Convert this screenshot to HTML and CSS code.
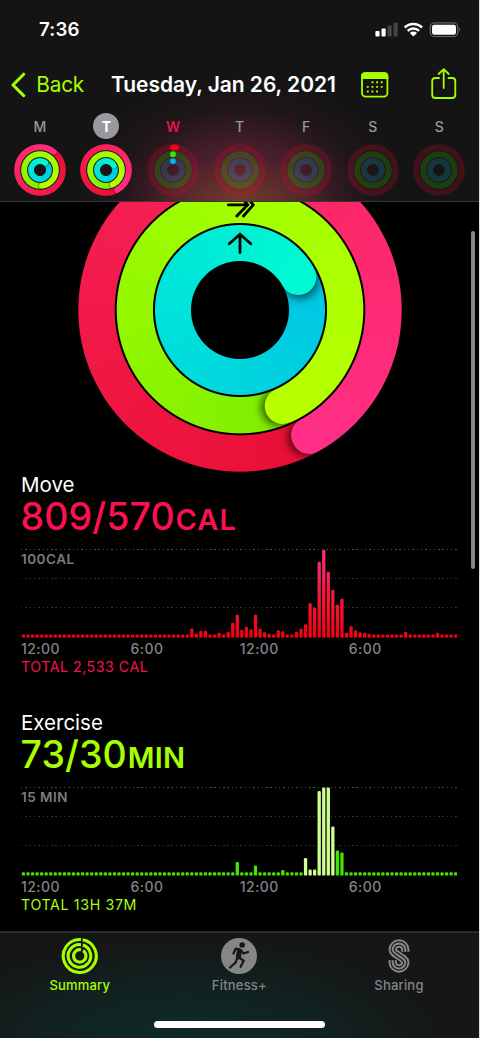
FILE: index.html
```html
<!DOCTYPE html>
<html lang="en">
<head>
<meta charset="utf-8">
<title>Activity</title>
<link rel="stylesheet" href="styles.css">
</head>
<body>
<div class="screen">
  <header class="header">
    <div class="status">
      <span class="time">7:36</span>
      <svg class="status-icons" width="87" height="18" viewBox="0 0 87 18">
        <g fill="#fff"><rect x="0.4" y="9" width="4.2" height="5.4" rx="1"/><rect x="6.5" y="6.5" width="4.2" height="7.9" rx="1"/></g>
        <g fill="#454545"><rect x="12.5" y="3.6" width="4.2" height="10.8" rx="1"/><rect x="18.5" y="0.8" width="4.2" height="13.6" rx="1"/></g>
        <g fill="none" stroke="#fff" stroke-width="2.5"><path d="M29.7 5.5A12.3 12.3 0 0 1 47.1 5.5"/><path d="M32.7 8.8A8.1 8.1 0 0 1 44.1 8.8"/></g>
        <path d="M38.4 14.5L34.8 10.9A5.1 5.1 0 0 1 42 10.9Z" fill="#fff"/>
        <rect x="55.3" y="0.9" width="27.4" height="13.6" rx="4" fill="none" stroke="#666" stroke-width="1.2"/>
        <rect x="57" y="2.7" width="24" height="10" rx="2.3" fill="#fff"/>
        <path d="M84 5.5Q86.2 7.7 84 9.9Z" fill="#666"/>
      </svg>
    </div>
    <div class="nav">
      <svg class="chevron" width="15" height="26" viewBox="0 0 15 26"><path d="M12.7 2.2L2 13L12.7 23.6" fill="none" stroke="#a6ff00" stroke-width="3" stroke-linecap="round" stroke-linejoin="round"/></svg>
      <span class="back">Back</span>
      <h1 class="title">Tuesday, Jan 26, 2021</h1>
      <svg class="calendar" width="28" height="26" viewBox="0 0 28 26">
        <rect x="1" y="1.2" width="25.4" height="23.4" rx="3.5" fill="none" stroke="#a6ff00" stroke-width="1.8"/>
        <path d="M.2 7V4Q.2.3 4 .3H23.5Q27.3.3 27.3 4V7Z" fill="#a6ff00"/>
        <g stroke="#a6ff00" stroke-width="1.9" stroke-dasharray="1.9 2.75"><path d="M10.5 10.3H23"/><path d="M5.8 14.9H23"/><path d="M5.8 19.5H18"/></g>
      </svg>
      <svg class="share" width="26" height="32" viewBox="0 0 26 32"><g fill="none" stroke="#a6ff00" stroke-width="1.8" stroke-linecap="round" stroke-linejoin="round"><path d="M8 10H4.5Q1.2 10 1.2 13.3V26.7Q1.2 30 4.5 30H21Q24.3 30 24.3 26.7V13.3Q24.3 10 21 10H17.5"/><path d="M12.7 20V1.2M7.7 6L12.7 1.2L17.7 6"/></g></svg>
    </div>
    <div class="week">
      <div class="day"><span class="letter">M</span><div class="rings mini" data-ends="37,173,36"></div></div>
      <div class="day"><span class="letter selected">T</span><div class="rings mini" data-ends="151,156,60"></div></div>
      <div class="day"><span class="letter today">W</span><svg class="track" viewBox="-26 -26 52 52"><use href="#tracks"/><path d="M0-22.7H3" stroke="#f40017" stroke-width="5.8" stroke-linecap="round"/><circle cy="-15.8" r="2.9" fill="#3be600"/><circle cy="-8.9" r="2.9" fill="#00b9e8"/></svg></div>
      <div class="day"><span class="letter">T</span><svg class="track" viewBox="-26 -26 52 52"><use href="#tracks"/></svg></div>
      <div class="day"><span class="letter">F</span><svg class="track" viewBox="-26 -26 52 52"><use href="#tracks"/></svg></div>
      <div class="day"><span class="letter">S</span><svg class="track" viewBox="-26 -26 52 52"><use href="#tracks"/></svg></div>
      <div class="day"><span class="letter">S</span><svg class="track" viewBox="-26 -26 52 52"><use href="#tracks"/></svg></div>
    </div>
    <svg class="defs" width="0" height="0"><defs><g id="tracks" fill="none" stroke-width="6"><circle r="22.7" stroke="#e30b2e" stroke-opacity=".22"/><circle r="15.8" stroke="#35c700" stroke-opacity=".23"/><circle r="8.9" stroke="#1ba6cf" stroke-opacity=".23"/></g></defs></svg>
  </header>

  <main class="content">
    <div class="hero">
      <div class="rings big" data-ends="151.1,156,60.5"></div>
      <svg class="arrows" viewBox="0 0 324 324"><g fill="none" stroke="#000" stroke-width="2.8" stroke-linecap="round" stroke-linejoin="round"><path d="M150.3 56.8H170M160 46L169.8 56.8L158.8 68"/><path d="M166 46L175.3 56.8L165.5 68"/><path d="M162 104.6V86.2M151.2 95.8L162 86.2L172.8 95.8"/></g></svg>
    </div>
    <section class="metric move">
      <h2 class="name">Move</h2>
      <div class="value"><span class="number">809/570</span><span class="unit">CAL</span></div>
      <div class="chart"><span class="scale">100CAL</span>
        <svg class="bars" id="move-bars" width="436" height="89" viewBox="0 0 436 89"><defs><linearGradient id="heat" gradientUnits="userSpaceOnUse" x1="0" y1="88.7" x2="0" y2="0"><stop stop-color="#f20012"/><stop offset=".35" stop-color="#f4142e"/><stop offset="1" stop-color="#fb2c80"/></linearGradient></defs></svg>
      </div>
      <div class="axis"><span>12:00</span><span>6:00</span><span>12:00</span><span>6:00</span></div>
      <div class="total">TOTAL 2,533 CAL</div>
    </section>
    <section class="metric exercise">
      <h2 class="name">Exercise</h2>
      <div class="value"><span class="number">73/30</span><span class="unit">MIN</span></div>
      <div class="chart"><span class="scale">15 MIN</span>
        <svg class="bars" id="exercise-bars" width="436" height="89" viewBox="0 0 436 89"></svg>
      </div>
      <div class="axis"><span>12:00</span><span>6:00</span><span>12:00</span><span>6:00</span></div>
      <div class="total">TOTAL 13H 37M</div>
    </section>
    <div class="scrollbar"></div>
  </main>

  <footer class="tabs">
    <div class="tab active">
      <svg width="38" height="38" viewBox="-19 -19 38 38"><g fill="none" stroke="#a6ff00" stroke-width="3.1"><path d="M2.6-16.3A16.5 16.5 0 1 1 1-16.5"/><path d="M2.8-10.9A11.3 11.3 0 1 1 1-11.3"/><path d="M3-5.4A6.2 6.2 0 1 1 1-6.2"/></g></svg>
      <span>Summary</span>
    </div>
    <div class="tab">
      <svg width="38" height="38" viewBox="-19 -19 38 38"><circle r="18" fill="#868686"/><circle cx="3.2" cy="-11" r="2.8" fill="#171919"/><g fill="none" stroke="#171919" stroke-width="2.3" stroke-linecap="round" stroke-linejoin="round"><path d="M1-6.5L-3.2-7.4L-5.5-2.5"/><path d="M2-5.5L4.5-2.5L9-4"/><path d="M-.8 1L4.7 4.8L1.6 10.7"/><path d="M-1.8 1.5L-3.2 6.3L-9 11.5"/></g><path d="M-1.5-8L2.7-6.5L2.1 1.5L-1 4L-3.3 1Z" fill="#171919"/></svg>
      <span>Fitness+</span>
    </div>
    <div class="tab">
      <svg width="38" height="38" viewBox="-19 -19 38 38"><g fill="none"><path d="M6.3-4.2V-6.2A6.3 6.3 0 0 0-6.3-6.2C-6.3-1.5 6.3 1.5 6.3 6.2A6.3 6.3 0 0 1-6.3 6.2V4.2" stroke="#868686" stroke-width="8.4"/><path d="M6.3-4.2V-6.2A6.3 6.3 0 0 0-6.3-6.2C-6.3-1.5 6.3 1.5 6.3 6.2A6.3 6.3 0 0 1-6.3 6.2V4.2" stroke="#171919" stroke-width="4.4"/><path d="M6.3-4.2V-6.2A6.3 6.3 0 0 0-6.3-6.2C-6.3-1.5 6.3 1.5 6.3 6.2A6.3 6.3 0 0 1-6.3 6.2V4.2" stroke="#868686" stroke-width="2.1"/></g></svg>
      <span>Sharing</span>
    </div>
    <div class="home"></div>
  </footer>
</div>
<script src="app.js"></script>
</body>
</html>
```

FILE: styles.css
```css
* { box-sizing: border-box; }
body { margin: 0; background: #ddd; font-family: Inter, "Liberation Sans", sans-serif; }
h1, h2 { margin: 0; font-weight: inherit; }
svg { display: block; flex: none; }
.screen { width: 479px; height: 1038px; background: #000; display: flex; flex-direction: column; overflow: hidden; }

.header {
  height: 202px; flex: none; border-bottom: 1px solid #363636; z-index: 1; overflow: hidden;
  background:
    radial-gradient(ellipse 95px 50px at 240px 208px, rgba(112, 78, 28, .6), rgba(112, 78, 28, .3) 50%, transparent),
    radial-gradient(ellipse 165px 125px at 240px 200px, rgba(150, 42, 76, .7), rgba(128, 40, 68, .44) 45%, rgba(90, 30, 50, .15) 75%, transparent),
    #141414;
}
.status { height: 59px; display: flex; justify-content: space-between; padding: 20px 17px 0 39px; }
.time { color: #fff; font-size: 18.7px; line-height: 20px; font-weight: 600; letter-spacing: .2px; }
.status-icons { margin-top: 2px; }
.nav { height: 51px; display: flex; align-items: center; padding-left: 11px; color: #a6ff00; }
.back { margin-left: 10.3px; width: 74.7px; font-size: 20.8px; letter-spacing: -.2px; }
.title { width: 249px; font-size: 21px; font-weight: 600; color: #fff; white-space: nowrap; letter-spacing: -.04px; }
.calendar { margin-left: 1px; }
.share { margin-left: 42px; margin-top: -2px; }
.week { display: grid; grid-template-columns: repeat(7, 66.6px); padding: 3px 0 0 6.5px; }
.day { display: flex; flex-direction: column; align-items: center; gap: 5px; }
.letter { width: 26px; height: 26px; border-radius: 50%; line-height: 27px; text-align: center; font-size: 14px; font-weight: 500; color: #98989d; }
.letter.selected { background: #98989f; color: #fff; font-weight: 700; }
.letter.today { color: #fa114f; }
.track { width: 52px; height: 52px; }
.defs { position: absolute; }

.rings { display: grid; flex: none; }
.rings.mini { --size: 52px; --shadow: 1px; }
.rings.big { --size: 324px; --shadow: 8px; }
.ring { grid-area: 1 / 1; display: grid; width: var(--size); height: var(--size);
  -webkit-mask: radial-gradient(circle closest-side, transparent calc(var(--hole) - .5px), #000 calc(var(--hole) + .5px), #000 calc(var(--r) - .5px), transparent calc(var(--r) + .5px)); }
.layer { grid-area: 1 / 1; background: conic-gradient(var(--colors)); }
.tail { -webkit-mask: conic-gradient(transparent 180deg, #000 180deg); }
.pivot { grid-area: 1 / 1; display: flex; justify-content: center; align-items: flex-start; padding-top: calc(var(--size) / 2 - var(--r)); }
.cap { width: calc(var(--r) - var(--hole)); height: calc(var(--r) - var(--hole)); border-radius: 50%; background: var(--end); box-shadow: calc(var(--shadow) * .45) 0 var(--shadow) rgba(0, 0, 0, .65); }
.red { --colors: #e90f35, #f01845 28%, #fb2767 70%, #ff2f87; --end: #ff2f87; }
.green { --colors: #7eee00, #93f700 30%, #a4ff00 60%, #b8ff00; --end: #b8ff00; }
.blue { --colors: #00c4e4, #00d8dd 38%, #00e8d8 70%, #00fad2; --end: #00fad2; }

.content { flex: 1; min-height: 0; position: relative; overflow: hidden; }
.hero { width: 324px; height: 324px; margin: -54px 0 0 77.7px; display: grid; }
.hero > * { grid-area: 1 / 1; z-index: 0; }
.metric { height: 237.7px; padding: 0 21px; }
.name { height: 26px; line-height: 26px; font-size: 20.5px; font-weight: 400; color: #fff; }
.value { height: 37px; line-height: 38px; white-space: nowrap; font-weight: 500; margin-left: -.5px; }
.number { font-size: 37.5px; letter-spacing: .1px; }
.unit { font-size: 29px; font-weight: 600; margin-left: .8px; letter-spacing: 1.1px; }
.exercise .unit { letter-spacing: .3px; }
.move .value, .move .total { color: #fa114f; }
.exercise .value, .exercise .total { color: #a6ff00; }
.chart { height: 89px; margin-top: 14px; width: 436px; display: grid;
  background:
    repeating-linear-gradient(90deg, #4c4c4c 0 1.4px, transparent 1.4px 4.3px) 0 0 / 100% 1px no-repeat,
    repeating-linear-gradient(90deg, #333 0 1.4px, transparent 1.4px 4.3px) 0 29px / 100% 1px no-repeat,
    repeating-linear-gradient(90deg, #333 0 1.4px, transparent 1.4px 4.3px) 0 58px / 100% 1px no-repeat; }
.scale { grid-area: 1 / 1; margin-top: 1px; font-size: 13.5px; line-height: 18px; font-weight: 600; color: #7c7c81; letter-spacing: .5px; }
.bars { grid-area: 1 / 1; }
.move .bar { fill: url(#heat); }
.exercise .bar { fill: #42e500; }
.exercise .bar.bright { fill: #ceff8f; }
.axis { display: grid; grid-template-columns: 109.5px 109.3px 109px 1fr; height: 22px; line-height: 22px; font-size: 14px; font-weight: 500; color: #838388; letter-spacing: .45px; }
.total { height: 16px; line-height: 14px; font-size: 14.2px; letter-spacing: .52px; }
.exercise .total { letter-spacing: .65px; }
.scrollbar { position: absolute; right: 4px; top: 29px; width: 4px; height: 338px; border-radius: 2px; background: #858585; }

.tabs { height: 107px; flex: none; border-top: 2px solid #292929; display: grid; grid-template-columns: repeat(3, 159.6px); grid-template-rows: 88px 7px;
  background: radial-gradient(ellipse 270px 110px at 185px 112px, #0d2c29, rgba(14, 43, 40, .6) 50%, transparent), #151616; }
.tab { display: flex; flex-direction: column; align-items: center; padding-top: 4px; color: #858585; font-size: 13px; font-weight: 500; letter-spacing: .2px; }
.tab span { line-height: 18px; margin-top: .5px; }
.tab.active { color: #a6ff00; }
.home { grid-column: 1 / -1; justify-self: center; width: 171px; height: 6.5px; border-radius: 4px; background: #fff; margin-left: 1px; }
```

FILE: app.js
```javascript
// Activity rings: each end angle is measured clockwise from the top.
const SIZES = {
  big: [[161.7, 125.3], [123.3, 87], [85, 49]],
  mini: [[25.8, 19.8], [18.8, 12.9], [11.9, 6]]
};
document.querySelectorAll('.rings').forEach(el => {
  const sizes = el.classList.contains('big') ? SIZES.big : SIZES.mini;
  const ends = el.dataset.ends.split(',');
  ['red', 'green', 'blue'].forEach((color, i) => {
    const ring = document.createElement('div');
    ring.className = 'ring ' + color;
    ring.style.cssText = `--r:${sizes[i][0]}px;--hole:${sizes[i][1]}px;transform:rotate(${ends[i]}deg)`;
    ring.innerHTML = '<div class="layer"></div><div class="pivot"><div class="cap"></div></div><div class="layer tail"></div>';
    el.append(ring);
  });
});

// One bar per quarter hour; quiet intervals use the baseline height.
function drawBars(id, base, data, bright = []) {
  const bars = document.getElementById(id);
  for (let i = 0; i < 96; i++) {
    const h = data[i] || 3.3;
    const bar = document.createElementNS('http://www.w3.org/2000/svg', 'rect');
    bar.setAttribute('class', bright.includes(i) ? 'bar bright' : 'bar');
    bar.setAttribute('x', (0.8 + i * 4.55).toFixed(2));
    bar.setAttribute('y', (base - h).toFixed(1));
    bar.setAttribute('width', 3.3);
    bar.setAttribute('height', h);
    bar.setAttribute('rx', 1.2);
    bars.append(bar);
  }
}
drawBars('move-bars', 88.7, {
  37: 9.3, 38: 4, 39: 7, 40: 7, 43: 5, 44: 3.5, 45: 6, 46: 15, 47: 23, 48: 8, 49: 11, 50: 8.5,
  51: 23, 52: 9, 53: 5.5, 54: 4, 56: 7.5, 57: 6.5, 60: 6, 61: 9, 62: 13.5, 63: 34.5, 64: 30,
  65: 76, 66: 88, 67: 66, 68: 48, 69: 33, 70: 39, 71: 5, 72: 11.5, 73: 7.5, 74: 5.5, 75: 5,
  76: 4, 84: 6, 91: 5
});
drawBars('exercise-bars', 88.6, {
  47: 13.5, 51: 10, 57: 5.5, 62: 17.5, 63: 6, 64: 6, 65: 84.5, 66: 88, 67: 88, 68: 49, 69: 25, 70: 23
}, [62, 63, 64, 65, 66, 67, 68]);
```
